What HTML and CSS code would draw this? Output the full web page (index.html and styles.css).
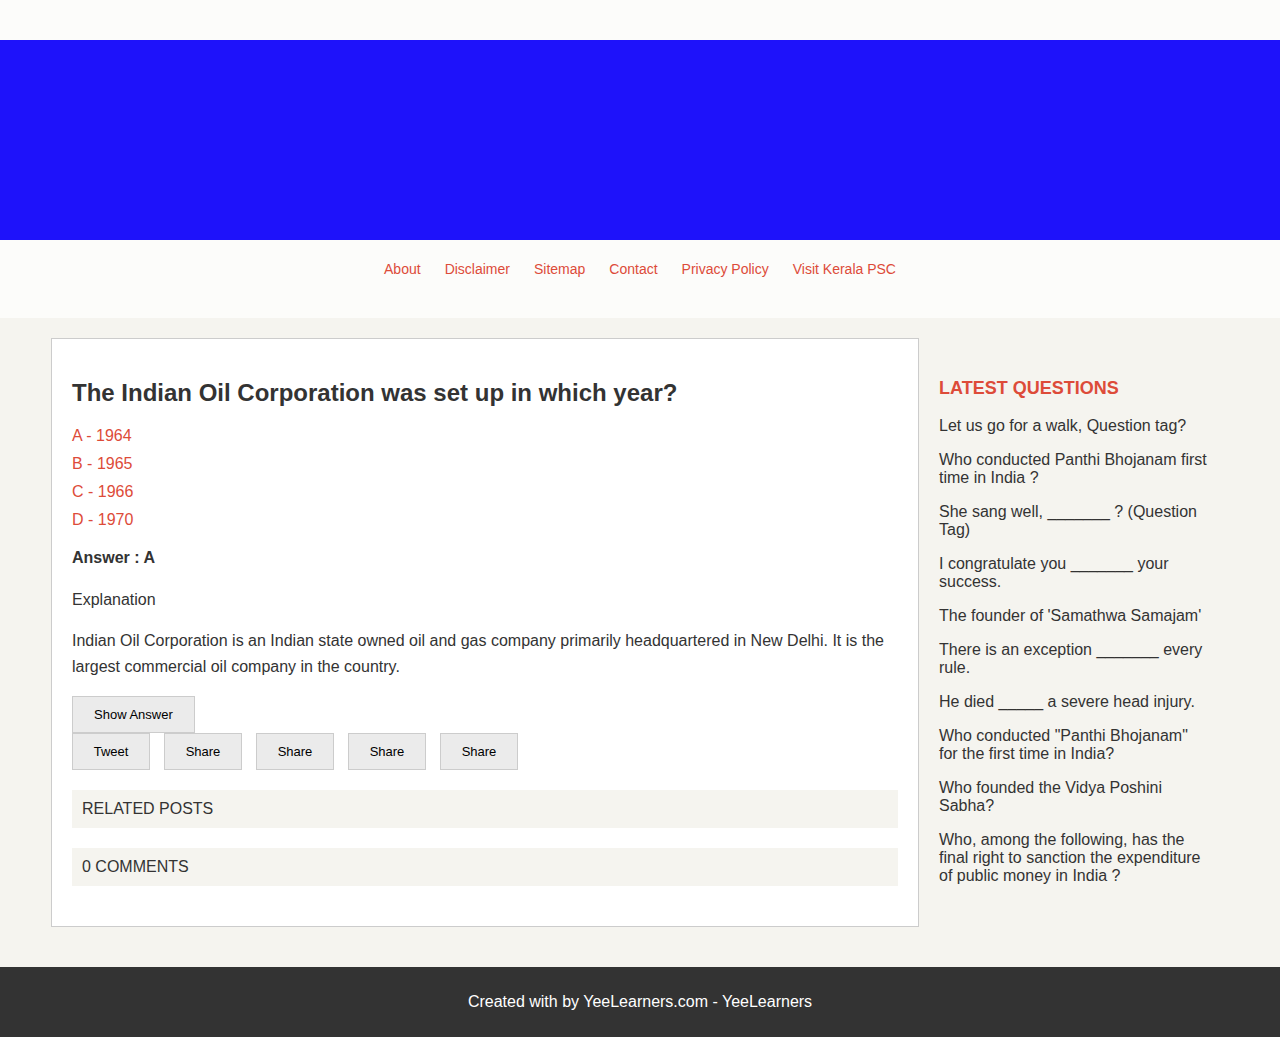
FILE: index.html
```html
<!DOCTYPE html>
<html>
<head>
<meta charset="utf-8">
<title>The Indian Oil Corporation was set up in which year?</title>
<link rel="stylesheet" href="styles.css">
</head>
<body>
<header class="site-header">
  <div class="banner"></div>
  <nav class="nav">
    <a href="#">About</a>
    <a href="#">Disclaimer</a>
    <a href="#">Sitemap</a>
    <a href="#">Contact</a>
    <a href="#">Privacy Policy</a>
    <a href="#">Visit Kerala PSC</a>
  </nav>
</header>
<main class="main">
  <article class="card">
    <h1 class="title">The Indian Oil Corporation was set up in which year?</h1>
    <ul class="options">
      <li>A - 1964</li>
      <li>B - 1965</li>
      <li>C - 1966</li>
      <li>D - 1970</li>
    </ul>
    <p class="answer">Answer : A</p>
    <p class="expl-label">Explanation</p>
    <p class="expl">Indian Oil Corporation is an Indian state owned oil and gas company primarily headquartered in New Delhi. It is the largest commercial oil company in the country.</p>
    <div class="btn-row"><button class="btn">Show Answer</button></div>
    <div class="btn-row share-row">
      <button class="btn btn-sm">Tweet</button>
      <button class="btn btn-sm">Share</button>
      <button class="btn btn-sm">Share</button>
      <button class="btn btn-sm">Share</button>
      <button class="btn btn-sm">Share</button>
    </div>
    <div class="section-bar">RELATED POSTS</div>
    <div class="section-bar">0 COMMENTS</div>
  </article>
  <aside class="sidebar">
    <h2 class="side-title">LATEST QUESTIONS</h2>
    <ul class="side-list">
      <li>Let us go for a walk, Question tag?</li>
      <li>Who conducted Panthi Bhojanam first time in India ?</li>
      <li>She sang well, _______ ? (Question Tag)</li>
      <li>I congratulate you _______ your success.</li>
      <li>The founder of 'Samathwa Samajam'</li>
      <li>There is an exception _______ every rule.</li>
      <li>He died _____ a severe head injury.</li>
      <li>Who conducted "Panthi Bhojanam" for the first time in India?</li>
      <li>Who founded the Vidya Poshini Sabha?</li>
      <li>Who, among the following, has the final right to sanction the expenditure of public money in India ?</li>
    </ul>
  </aside>
</main>
<footer class="footer">Created with by YeeLearners.com - YeeLearners</footer>
</body>
</html>
```

FILE: styles.css
```css
* { box-sizing: border-box; }
html, body { margin: 0; padding: 0; }
body {
  font-family: "Liberation Sans", Arial, sans-serif;
  color: #333;
  background: #f5f4ef;
  font-size: 16px;
}
.site-header {
  background: #fcfcfa;
  padding-top: 40px;
}
.banner {
  height: 200px;
  background: #1e12fa;
}
.nav {
  display: flex;
  justify-content: center;
  gap: 24px;
  padding: 20px 0 40px;
  font-size: 14px;
  line-height: 18px;
}
.nav a {
  color: #dd4b39;
  text-decoration: none;
}
.main {
  display: flex;
  width: 1180px;
  margin: 0 auto;
  padding: 20px 0 40px 1px;
}
.card {
  width: 868px;
  flex: none;
  background: #fff;
  border: 1px solid #ccc;
  padding: 20px 20px 40px;
}
.title {
  font-size: 24px;
  line-height: 30px;
  font-weight: bold;
  margin: 19px 0 14px;
}
.options {
  list-style: none;
  margin: 0;
  padding: 0;
  color: #dd4b39;
  line-height: 28px;
}
.answer {
  font-weight: bold;
  line-height: 28px;
  margin: 10px 0 15px;
}
.expl-label {
  line-height: 26px;
  margin: 0 0 15px;
}
.expl {
  line-height: 26px;
  margin: 0 0 16px;
}
.btn-row {
  display: flex;
  gap: 14px;
}
.btn {
  font-family: "Liberation Sans", Arial, sans-serif;
  font-size: 13px;
  color: #000;
  background: #ebebeb;
  border: 1px solid #ccc;
  height: 37px;
  padding: 0 21px;
  margin: 0;
  cursor: pointer;
}
.btn-sm { width: 78px; padding: 0; }
.share-row { margin-bottom: 20px; }
.section-bar {
  background: #f5f4ef;
  height: 38px;
  line-height: 38px;
  padding: 0 10px;
  margin-bottom: 20px;
}
.section-bar:last-child { margin-bottom: 0; }
.sidebar {
  flex: 1;
  padding: 39px 20px 0;
}
.side-title {
  margin: 0 0 18px;
  font-size: 18px;
  line-height: 22px;
  color: #dd4b39;
  font-weight: bold;
}
.side-list {
  list-style: none;
  margin: 0;
  padding: 0;
  line-height: 18px;
  display: flex;
  flex-direction: column;
  gap: 16px;
}
.footer {
  background: #333;
  color: #fff;
  height: 70px;
  display: flex;
  align-items: center;
  justify-content: center;
}
```
